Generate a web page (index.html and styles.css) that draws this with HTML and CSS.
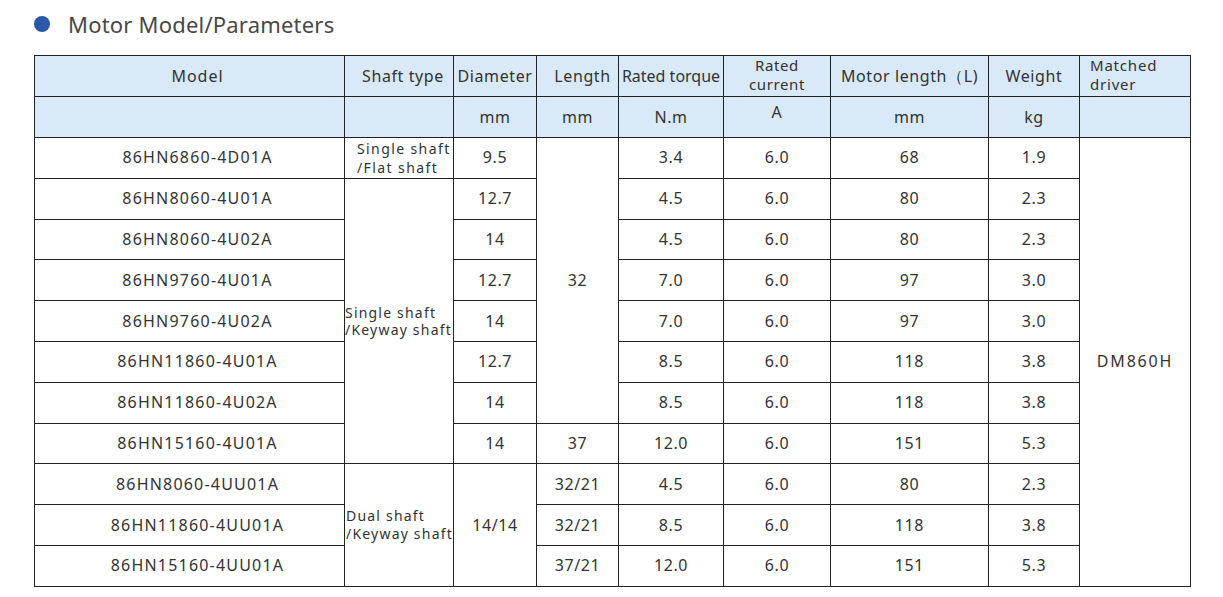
FILE: index.html
```html
<!DOCTYPE html>
<html>
<head>
<meta charset="utf-8">
<link rel="stylesheet" href="styles.css">
</head>
<body>
<div class="title"><span class="dot"></span><h2>Motor Model/Parameters</h2></div>
<table class="spec">
<colgroup>
<col class="c1"><col class="c2"><col class="c3"><col class="c4"><col class="c5"><col class="c6"><col class="c7"><col class="c8"><col class="c9">
</colgroup>
<thead>
<tr>
<th class="model">Model</th><th class="st">Shaft type</th><th>Diameter</th><th class="len">Length</th><th class="tq">Rated torque</th><th class="two">Rated<br>current</th><th>Motor length（L)</th><th>Weight</th><th class="drv">Matched<br>driver</th>
</tr>
<tr class="units">
<th></th><th></th><th>mm</th><th>mm</th><th>N.m</th><th class="amp">A</th><th>mm</th><th>kg</th><th></th>
</tr>
</thead>
<tbody>
<tr><td class="model">86HN6860-4D01A</td><td class="shaft pad">Single shaft<br>/Flat shaft</td><td>9.5</td><td rowspan="7">32</td><td>3.4</td><td>6.0</td><td>68</td><td>1.9</td><td class="dm" rowspan="11">DM860H</td></tr>
<tr><td class="model">86HN8060-4U01A</td><td class="shaft tight" rowspan="7">Single shaft<br>/Keyway shaft</td><td>12.7</td><td>4.5</td><td>6.0</td><td>80</td><td>2.3</td></tr>
<tr><td class="model">86HN8060-4U02A</td><td>14</td><td>4.5</td><td>6.0</td><td>80</td><td>2.3</td></tr>
<tr><td class="model">86HN9760-4U01A</td><td>12.7</td><td>7.0</td><td>6.0</td><td>97</td><td>3.0</td></tr>
<tr><td class="model">86HN9760-4U02A</td><td>14</td><td>7.0</td><td>6.0</td><td>97</td><td>3.0</td></tr>
<tr><td class="model">86HN11860-4U01A</td><td>12.7</td><td>8.5</td><td>6.0</td><td>118</td><td>3.8</td></tr>
<tr><td class="model">86HN11860-4U02A</td><td>14</td><td>8.5</td><td>6.0</td><td>118</td><td>3.8</td></tr>
<tr><td class="model">86HN15160-4U01A</td><td>14</td><td>37</td><td>12.0</td><td>6.0</td><td>151</td><td>5.3</td></tr>
<tr><td class="model">86HN8060-4UU01A</td><td class="shaft pad2" rowspan="3">Dual shaft<br>/Keyway shaft</td><td rowspan="3">14/14</td><td>32/21</td><td>4.5</td><td>6.0</td><td>80</td><td>2.3</td></tr>
<tr><td class="model">86HN11860-4UU01A</td><td>32/21</td><td>8.5</td><td>6.0</td><td>118</td><td>3.8</td></tr>
<tr><td class="model">86HN15160-4UU01A</td><td>37/21</td><td>12.0</td><td>6.0</td><td>151</td><td>5.3</td></tr>
</tbody>
</table>
</body>
</html>
```
FILE: styles.css
```css
html, body {
  margin: 0;
  padding: 0;
  background: #fff;
}
body {
  font-family: "Noto Sans", "Open Sans", sans-serif;
  color: #333;
}
.title {
  display: flex;
  align-items: center;
  height: 47px;
  padding-left: 34px;
}
.dot {
  width: 16px;
  height: 16px;
  border-radius: 50%;
  background: #2c58a8;
  margin-right: 18px;
}
.title h2 {
  margin: 0;
  font-weight: 400;
  font-size: 22px;
  color: #484848;
  letter-spacing: 0.2px;
}
.spec {
  margin-left: 34px;
  margin-top: 8px;
  border-collapse: collapse;
  table-layout: fixed;
  width: 1156px;
}
.c1 { width: 310px; }
.c2 { width: 109px; }
.c3 { width: 83px; }
.c4 { width: 82px; }
.c5 { width: 105px; }
.c6 { width: 107px; }
.c7 { width: 158px; }
.c8 { width: 91px; }
.c9 { width: 111px; }
.spec th, .spec td {
  border: 1px solid #222;
  height: 39.8px;
  padding: 0;
  text-align: center;
  vertical-align: middle;
  font-size: 16px;
  font-weight: 400;
  letter-spacing: 0.6px;
  color: #333;
  line-height: 19px;
  white-space: nowrap;
}
.spec thead th {
  background: #d9e9f8;
  height: 40px;
}
.spec .model {
  padding-left: 16px;
  letter-spacing: 1.2px;
}
.spec th.model { letter-spacing: 1px; }
.spec th.st { padding-left: 8px; }
.spec th.len { padding-left: 10px; }
.spec th.tq { letter-spacing: 0; }
.spec thead th.two {
  font-size: 15px;
  line-height: 19px;
  padding-bottom: 2px;
  height: 38px;
}
.spec thead th.drv {
  text-align: left;
  padding-left: 10px;
  padding-bottom: 2px;
  height: 38px;
  font-size: 15px;
  line-height: 19px;
  letter-spacing: 0.8px;
}
.spec thead th.amp { padding-bottom: 10px; height: 30px; }
.spec td.dm { letter-spacing: 1.8px; }
.spec td.shaft {
  text-align: left;
  font-size: 14px;
  line-height: 18px;
  letter-spacing: 1.4px;
}
.spec td.pad { padding-left: 12px; line-height: 19px; }
.spec td.tight { letter-spacing: 1.2px; line-height: 17px; }
.spec td.pad2 { padding-left: 1px; letter-spacing: 1.2px; }
```
